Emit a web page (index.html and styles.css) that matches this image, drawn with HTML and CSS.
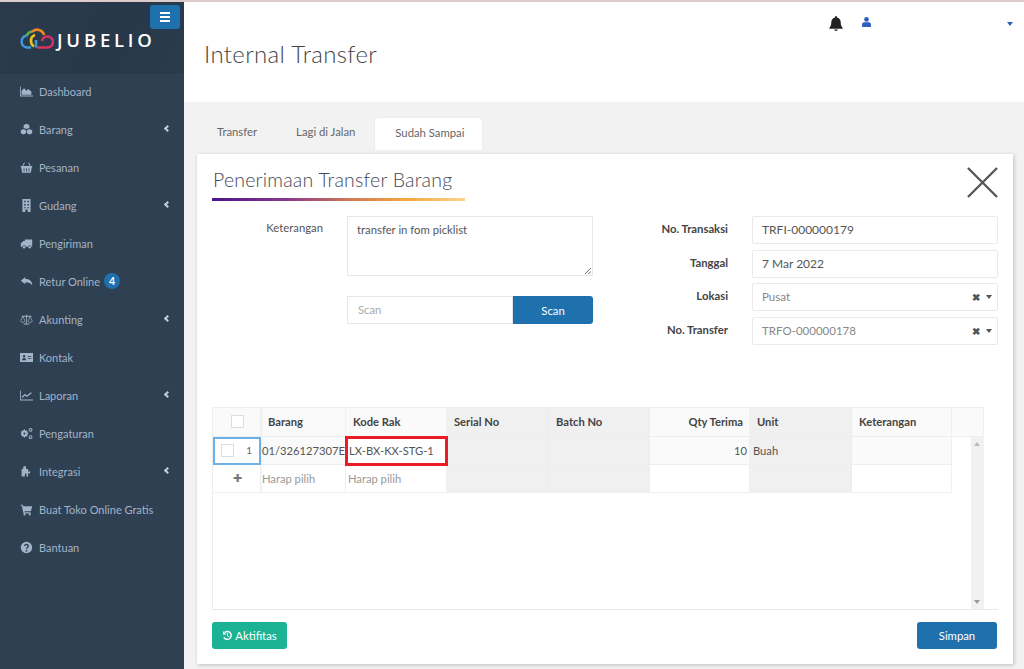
FILE: index.html
```html
<!DOCTYPE html>
<html lang="id">
<head>
<meta charset="utf-8">
<title>Internal Transfer</title>
<link rel="stylesheet" href="styles.css">
</head>
<body>
<div class="topline"></div>
<div class="app">
  <aside class="sidebar">
    <div class="brand">
      <button class="burger" aria-label="menu"><span></span><span></span><span></span></button>
      <svg class="logo" viewBox="0 0 34 22" fill="none" stroke-width="2.600">
        <path d="M11 19.500H7.500a6 6 0 0 1-1-11.900" stroke="#3c9ad6"/>
        <path d="M6.500 8a7 7 0 0 1 6-4.500" stroke="#5fb24a"/>
        <path d="M14 18.500a6.500 6.500 0 0 1-3-5.500 6 6 0 0 1 4-6" stroke="#f2c01e"/>
        <path d="M12 4a7 7 0 0 1 12 3" stroke="#ee8a22"/>
        <path d="M17 19.500h10.500a5.500 5.500 0 0 0 0-11 5.500 5.500 0 0 0-5.500 4.500" stroke="#d8305f"/>
        <path d="M16 12v7.500" stroke="#3c9ad6"/>
      </svg>
      <span class="wordmark">JUBELIO</span>
    </div>
    <nav class="nav">
      <a class="nav-item"><svg class="ico" viewBox="0 0 16 16"><path d="M0 2h1v11h15v1H0z"/><path d="M2 12V7l3-3 3 3 2-2 4 3v4z"/></svg><span>Dashboard</span></a>
      <a class="nav-item"><svg class="ico" viewBox="0 0 16 16"><path d="M8 1l3.500 1.500v3.500L8 7.500 4.500 6V2.500zM4.200 7.500l3.300 1.400v3.600L4.200 14 1 12.500V9zM11.800 7.500L15 9v3.500L11.800 14l-3.300-1.500V8.900z"/></svg><span>Barang</span><i class="chev"></i></a>
      <a class="nav-item"><svg class="ico" viewBox="0 0 16 16"><path d="M1 6h14v2h-.6l-1 6.500H2.600L1.600 8H1z"/><path d="M3.500 6l2-4M12.500 6l-2-4" stroke="currentColor" fill="none" stroke-width="1.200"/><path d="M5 9v4M8 9v4M11 9v4" stroke="#2f4052" fill="none"/></svg><span>Pesanan</span></a>
      <a class="nav-item"><svg class="ico" viewBox="0 0 16 16"><path fill-rule="evenodd" d="M3 0h10v16H9.500v-3h-3v3H3zM5 2v2h2V2zm4 0v2h2V2zM5 6v2h2V6zm4 0v2h2V6zM5 10v1.500h2V10zm4 0v1.500h2V10z"/></svg><span>Gudang</span><i class="chev"></i></a>
      <a class="nav-item"><svg class="ico" viewBox="0 0 16 16"><path d="M6 3h9v9h-1a2 2 0 0 0-4 0H7a2 2 0 0 0-4 0H1V8l3-3h2z"/><circle cx="5" cy="12.500" r="1.500"/><circle cx="12" cy="12.500" r="1.500"/></svg><span>Pengiriman</span></a>
      <a class="nav-item"><svg class="ico" viewBox="0 0 16 16"><path d="M1 7l5.500-4.500V5c5 0 8.500 2 8.500 8-1.500-3-4-4-8.500-4v2.500z"/></svg><span>Retur Online</span><b class="badge">4</b></a>
      <a class="nav-item"><svg class="ico" viewBox="0 0 16 16"><path d="M7.500 2h1v11h3v1h-7v-1h3zM2 3.500h12v1H2z"/><path d="M3.500 4L1 9.500a2.500 2 0 0 0 5 0zM12.500 4L10 9.500a2.500 2 0 0 0 5 0z" fill="none" stroke="currentColor" stroke-width=".9"/></svg><span>Akunting</span><i class="chev"></i></a>
      <a class="nav-item"><svg class="ico" viewBox="0 0 16 16"><path fill-rule="evenodd" d="M0 2.500h16v11H0zM5 5a1.500 1.500 0 1 0 0 3 1.500 1.500 0 0 0 0-3zM2.500 11.500h5C7.500 9.500 6.500 8.500 5 8.500s-2.500 1-2.500 3zM9.500 6v1H14V6zm0 2.500v1H14v-1z"/></svg><span>Kontak</span></a>
      <a class="nav-item"><svg class="ico" viewBox="0 0 16 16"><path d="M0 2h1v11h15v1H0z"/><path d="M2.500 10.500L6 7l2.500 2L14 4.500" fill="none" stroke="currentColor" stroke-width="1.500"/></svg><span>Laporan</span><i class="chev"></i></a>
      <a class="nav-item"><svg class="ico" viewBox="0 0 16 16"><circle cx="5.500" cy="8" r="3" fill="none" stroke="currentColor" stroke-width="2.200"/><path d="M5.500 3v10M1 8h9M2.300 4.800l6.400 6.400M8.700 4.800l-6.400 6.400" stroke="currentColor" stroke-width="1.500"/><circle cx="5.500" cy="8" r="1.300" fill="#2f4052"/><circle cx="13" cy="3.500" r="1.700" fill="none" stroke="currentColor" stroke-width="1.300"/><circle cx="13" cy="12.500" r="1.700" fill="none" stroke="currentColor" stroke-width="1.300"/></svg><span>Pengaturan</span></a>
      <a class="nav-item"><svg class="ico" viewBox="0 0 16 16"><path d="M4 5V3a1.700 1.700 0 0 1 3.400 0v2H10v3h2.500v2H10v4H8V11.500a1 1 0 0 0-2 0V14H2V5z"/></svg><span>Integrasi</span><i class="chev"></i></a>
      <a class="nav-item"><svg class="ico" viewBox="0 0 16 16"><path d="M1 2h2.500l.5 2h11l-1.500 6H5.500l.3 1.300H13V13H4.300L2.300 3.500H1z"/><circle cx="5.500" cy="14" r="1.300"/><circle cx="12" cy="14" r="1.300"/></svg><span>Buat Toko Online Gratis</span></a>
      <a class="nav-item"><svg class="ico" viewBox="0 0 16 16"><circle cx="8" cy="8" r="7"/><path d="M5.700 6.200a2.300 2 0 1 1 3.400 1.800C8.300 8.500 8 8.800 8 9.800" fill="none" stroke="#2f4052" stroke-width="1.700"/><circle cx="8" cy="12" r="1.100" fill="#2f4052"/></svg><span>Bantuan</span></a>
    </nav>
  </aside>

  <main class="main">
    <header class="header">
      <div class="userbar">
        <svg class="bell" viewBox="0 0 16 16"><path d="M8 0a1 1 0 0 1 1 1v.6c2.500.5 4 2.500 4 5 0 3.400 1 4.600 2 5.900V13.500H1V12.500c1-1.300 2-2.500 2-5.900 0-2.500 1.500-4.500 4-5V1a1 1 0 0 1 1-1zM6 14.500h4a2 1.500 0 0 1-4 0z"/></svg>
        <svg class="user" viewBox="0 0 8 9"><circle cx="4" cy="2.200" r="2.100"/><path d="M0 9V6.800C0 5.500 1 4.800 2 4.800h4c1 0 2 .7 2 2V9z"/></svg>
        <i class="user-caret"></i>
      </div>
      <h1 class="page-title">Internal Transfer</h1>
    </header>

    <div class="tabs">
      <a class="tab">Transfer</a>
      <a class="tab">Lagi di Jalan</a>
      <a class="tab tab-active">Sudah Sampai</a>
    </div>

    <section class="card">
      <div class="card-head">
        <h2 class="card-title">Penerimaan Transfer Barang</h2>
        <svg class="close" viewBox="0 0 32 32"><path d="M1 1l30 30M31 1L1 31" stroke="#555" stroke-width="2.400"/></svg>
      </div>

      <div class="form">
        <div class="form-left">
          <div class="field-note">
            <label class="lbl lbl-left">Keterangan</label>
            <div class="textarea">transfer in fom picklist
              <svg class="grip" viewBox="0 0 8 8"><path d="M1 8l7-7M5 8l3-3" stroke="#555" fill="none"/></svg>
            </div>
          </div>
          <div class="scanrow">
            <div class="scaninput">Scan</div>
            <button class="btn-scan">Scan</button>
          </div>
        </div>
        <div class="form-right">
          <div class="row"><label class="lbl">No. Transaksi</label><div class="input">TRFI-000000179</div></div>
          <div class="row"><label class="lbl">Tanggal</label><div class="input">7 Mar 2022</div></div>
          <div class="row"><label class="lbl">Lokasi</label><div class="input select"><span>Pusat</span><b class="x">✖</b><i class="caret"></i></div></div>
          <div class="row"><label class="lbl">No. Transfer</label><div class="input select"><span>TRFO-000000178</span><b class="x">✖</b><i class="caret"></i></div></div>
        </div>
      </div>

      <div class="tablewrap">
        <div class="grid">
          <div class="c h rowhead"><i class="check"></i></div>
          <div class="c h">Barang</div>
          <div class="c h">Kode Rak</div>
          <div class="c h ro">Serial No</div>
          <div class="c h ro">Batch No</div>
          <div class="c h right">Qty Terima</div>
          <div class="c h ro">Unit</div>
          <div class="c h">Keterangan</div>
          <div class="c h blank"></div>

          <div class="c d rowhead selected"><i class="check"></i><small>1</small></div>
          <div class="c d clip">01/326127307E</div>
          <div class="c d marked">LX-BX-KX-STG-1</div>
          <div class="c d ro"></div>
          <div class="c d ro"></div>
          <div class="c d right">10</div>
          <div class="c d ro">Buah</div>
          <div class="c d"></div>
          <div class="scroll"><i class="up"></i><i class="down"></i></div>

          <div class="c n rowhead plus">✚</div>
          <div class="c n hint">Harap pilih</div>
          <div class="c n hint">Harap pilih</div>
          <div class="c n ro"></div>
          <div class="c n ro"></div>
          <div class="c n"></div>
          <div class="c n ro"></div>
          <div class="c n"></div>
        </div>
      </div>

      <div class="footer">
        <button class="btn btn-green"><svg class="hist" viewBox="0 0 12 12"><path d="M3 2.600A4.300 4.300 0 1 1 2 8" fill="none" stroke="#fff" stroke-width="1.500"/><path d="M1 1v4h4z" fill="#fff"/><path d="M6 3.500v3l2 1" fill="none" stroke="#fff"/></svg>Aktifitas</button>
        <button class="btn btn-blue">Simpan</button>
      </div>
    </section>
  </main>
</div>
</body>
</html>
```
FILE: styles.css
```css
* { box-sizing: border-box; }
html, body { margin: 0; height: 669px; overflow: hidden; }
body { font-family: "Lato", "Noto Sans", sans-serif; font-size: 11.300px; color: #555; background: #f2f2f2; }
.topline { height: 2px; background: #dccccc; }
.app { display: flex; height: 667px; }

/* sidebar */
.sidebar { width: 184px; flex: none; background: #2f4052; color: #a3b3c8; }
.brand { position: relative; height: 72px; background: linear-gradient(115deg, #2b3b4c 0%, #27384a 60%, #2a3b4c 100%); display: flex; align-items: center; padding: 0 0 0 20px; gap: 3px; }
.burger { position: absolute; left: 150px; top: 3px; width: 30px; height: 24px; border: 0; border-radius: 3px; background: #1f71ad; display: flex; flex-direction: column; justify-content: center; align-items: center; gap: 2px; padding: 0; }
.burger span { width: 10px; height: 2px; background: #fff; }
.logo { width: 34px; height: 22px; margin-top: 2px; flex: none; }
.wordmark { color: #fff; font-family: "Open Sans", sans-serif; font-weight: 600; font-size: 18.500px; letter-spacing: 3.800px; line-height: 1; margin-top: 4px; }
.nav { display: flex; flex-direction: column; margin-top: -2px; font-size: 11px; }
.nav-item { height: 38px; display: flex; align-items: center; padding-left: 20px; position: relative; }
.ico { width: 13px; height: 13px; fill: currentColor; flex: none; margin-right: 6px; }
.chev { position: absolute; left: 164.500px; top: 16px; width: 5px; height: 5px; border-left: 2px solid #c3cfdc; border-bottom: 2px solid #c3cfdc; transform: rotate(45deg); }
.badge { width: 16px; height: 16px; border-radius: 50%; background: #1f71ad; color: #fff; font-size: 10.500px; display: flex; align-items: center; justify-content: center; margin-left: 4px; }

/* main */
.main { flex: 1; min-width: 0; display: flex; flex-direction: column; align-items: flex-start; }
.header { position: relative; width: 100%; height: 100px; background: #fff; padding: 37px 0 0 20px; }
.page-title { margin: 0; font-weight: 300; font-size: 24px; line-height: 30px; color: #444; letter-spacing: .35px; }
.userbar { position: absolute; left: 0; right: 0; top: 0; height: 40px; }
.bell { position: absolute; left: 644px; top: 14px; width: 16px; height: 15px; fill: #222; }
.user { position: absolute; left: 678px; top: 15px; width: 9px; height: 10px; fill: #2f5fbd; }
.user-caret { position: absolute; left: 823px; top: 20px; border: 3.500px solid transparent; border-top: 4px solid #2f5fbd; border-bottom: 0; }

.tabs { display: flex; margin: 15px 0 0 13px; height: 33px; }
.tab { padding: 0 20px; line-height: 30px; color: #666; }
.tab + .tab { margin-left: -1px; }
.tab-active { background: #fff; border: 1px solid #ececec; border-bottom: 0; border-radius: 4px 4px 0 0; margin-left: -1px; padding: 0 18px 0 20px; }

.card { width: 816px; height: 510px; margin: 4px 0 0 13px; background: #fff; box-shadow: 1px 1px 4px rgba(0,0,0,.22); padding: 0 15px; display: flex; flex-direction: column; }
.card-head { position: relative; height: 48px; padding-top: 13px; }
.card-title { display: inline-block; margin: 0 0 0 1px; font-weight: 300; font-size: 19.500px; line-height: 26px; color: #444a55; letter-spacing: .22px; white-space: nowrap; }
.card-head::after { content: ""; position: absolute; left: 0; top: 44px; width: 253px; height: 3px; background: linear-gradient(90deg, #4b148d 0%, #8a3a8a 30%, #d07a55 55%, #f6a940 78%, #fcd48f 100%); }
.close { position: absolute; right: 0; top: 13px; width: 31px; height: 31px; }

.form { display: flex; height: 205px; padding-top: 14px; }
.form-left { width: 381px; flex: none; }
.field-note { display: flex; gap: 24px; }
.lbl { width: 111px; text-align: right; font-weight: 700; color: #444; flex: none; line-height: 26px; }
.lbl-left { font-weight: 400; color: #555; line-height: 24px; }
.textarea { position: relative; width: 246px; height: 60px; border: 1px solid #e6e6e6; padding: 5px 9px; line-height: 15px; color: #555; }
.grip { position: absolute; right: 1px; bottom: 1px; width: 7px; height: 7px; }
.scanrow { display: flex; margin: 20px 0 0 135px; height: 28px; }
.scaninput { width: 166px; border: 1px solid #e6e6e6; color: #aaa; padding: 0 10px; line-height: 26px; }
.btn-scan { width: 80px; border: 0; border-radius: 0 3px 3px 0; background: #1f71ad; color: #fff; font: inherit; }
.form-right { flex: 1; display: flex; flex-direction: column; gap: 5.500px; padding-left: 20px; }
.row { display: flex; gap: 24px; }
.form-right .lbl { width: 115px; }
.input { flex: 1; height: 28px; border: 1px solid #eaeaea; border-radius: 2px; padding: 0 4px 0 9px; line-height: 26px; color: #555; display: flex; align-items: center; font-size: 12px; }
.select { color: #888; font-size: 11.500px; }
.select span { flex: 1; }
.x { font-size: 10px; color: #555; margin-right: 6px; }
.caret { border: 3.500px solid transparent; border-top: 4px solid #555; border-bottom: 0; margin-right: 1px; }

.tablewrap { height: 203px; border-bottom: 1px solid #e8e8e8; }
.grid { width: 772px; height: 202px; display: grid; grid-template-columns: 48px 85px 101px 102px 101px 100px 102px 100px 32px; grid-template-rows: 29px 28px 28px 1fr; border-left: 1px solid #eee; border-top: 1px solid #eee; font-size: 11.200px; }
.c { display: flex; align-items: center; padding: 0 2px 1px 3px; color: #555; border-bottom: 1px solid #eee; border-right: 1px solid #f0f0f0; white-space: nowrap; }
.h { background: #fafafa; font-weight: 700; color: #444; padding: 0 6px 2px 7px; }
.d { background: #fafafa; }
.n { background: #fff; }
.ro { background: #f0f0f0; border-right-color: #ececec; }
.right { justify-content: flex-end; }
.rowhead { justify-content: center; box-shadow: 2px 0 2px -1px rgba(0,0,0,.06); position: relative; }
.check { width: 13px; height: 13px; border: 1px solid #ddd; background: #fff; display: block; }
.selected { border: 2px solid #6db0e8; justify-content: flex-start; padding-left: 6px; background: #fff; }
.selected small { position: absolute; right: 7px; top: 5px; font-size: 10px; color: #666; }
.clip { overflow: hidden; padding: 0 1px 1px; }
.marked { outline: 3px solid #ec1c24; outline-offset: -2px; padding-left: 3px; background: #fff; z-index: 1; }
.plus { font-size: 11px; color: #777; }
.hint { color: #999; padding: 0 1px; }
.n.hint + .hint { padding-left: 2px; }
.scroll { grid-column: 9; grid-row: 2 / 5; justify-self: end; width: 13px; background: #f1f1f1; position: relative; height: 172px; }
.up, .down { position: absolute; left: 3px; border: 3px solid transparent; }
.up { top: 5px; border-bottom: 4px solid #bbb; border-top: 0; }
.down { bottom: 5px; border-top: 4px solid #999; border-bottom: 0; }

.footer { display: flex; justify-content: space-between; padding: 12px 1px 0 0; }
.btn { height: 27px; border: 0; border-radius: 3px; color: #fff; font: inherit; display: flex; align-items: center; justify-content: center; }
.btn-green { width: 75px; background: #1bb394; gap: 2px; }
.btn-blue { width: 80px; background: #1f71ad; }
.hist { width: 11px; height: 11px; }
```
